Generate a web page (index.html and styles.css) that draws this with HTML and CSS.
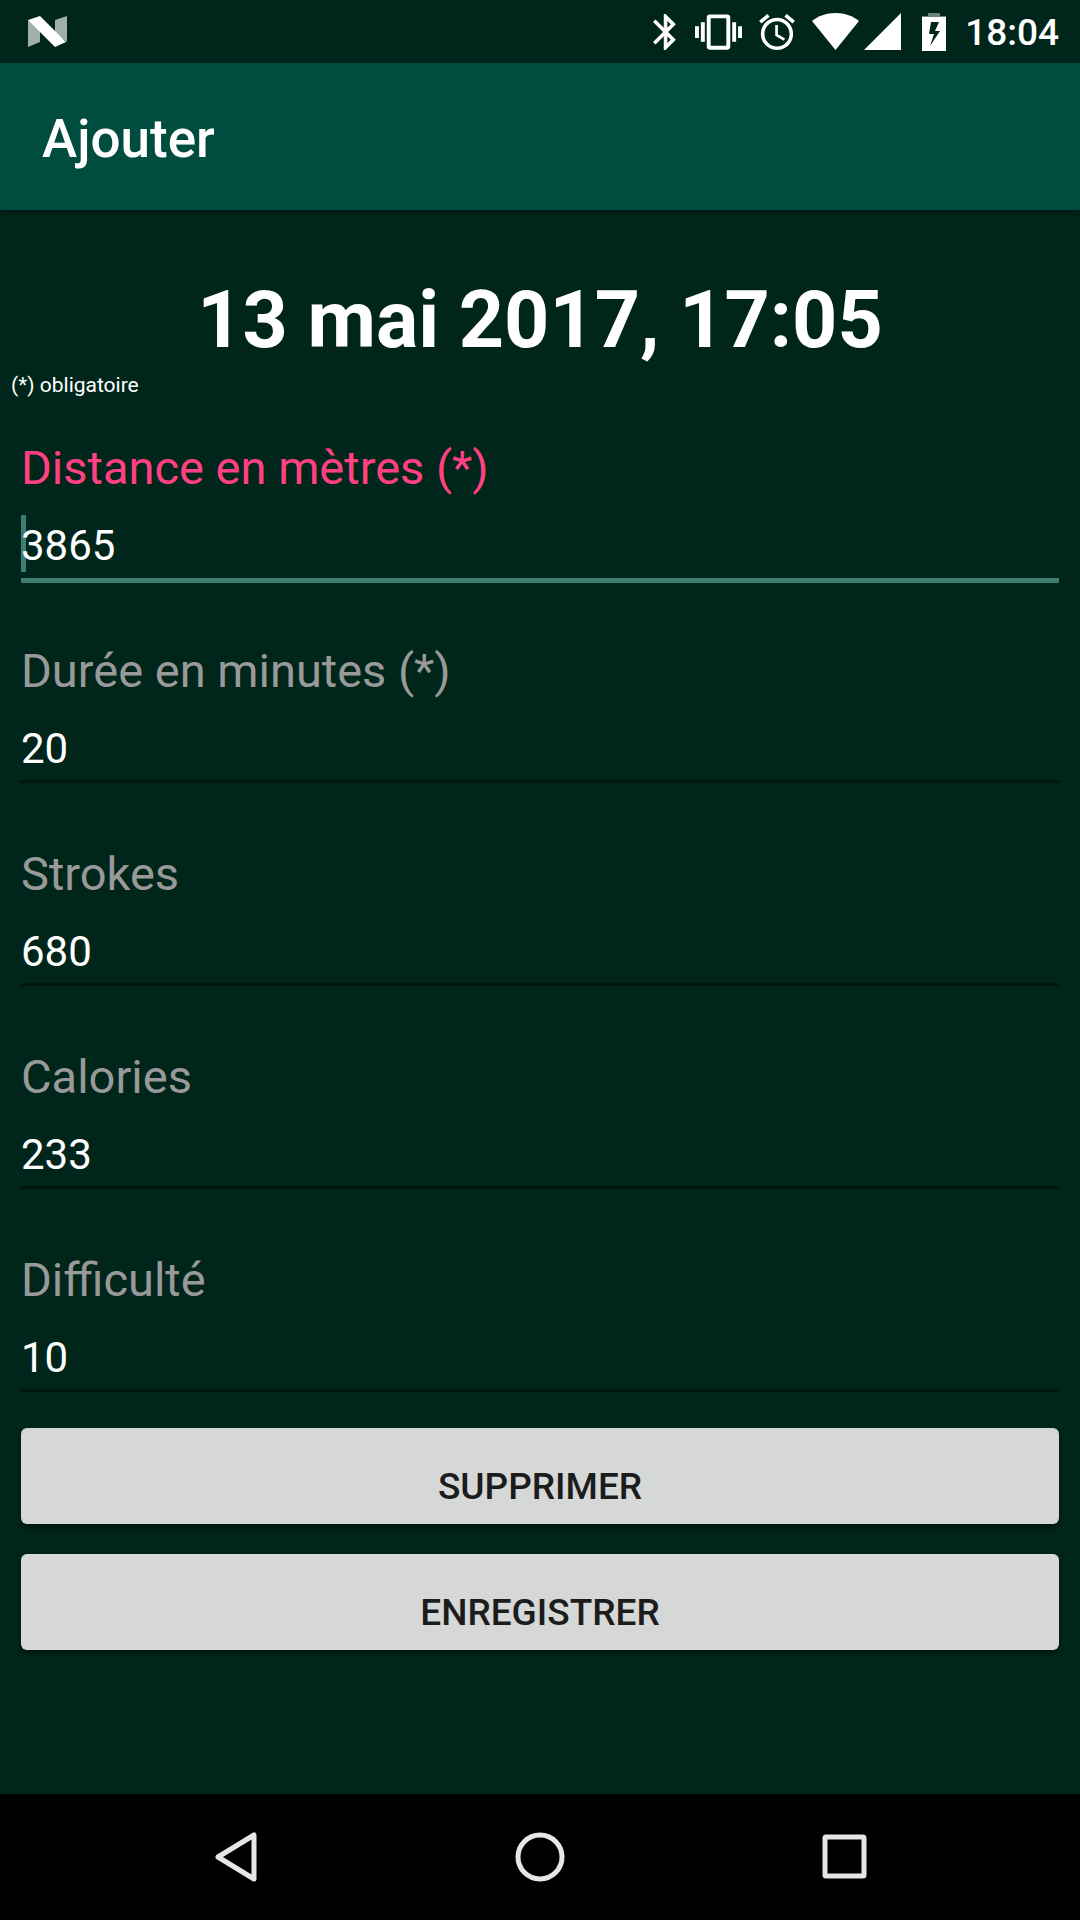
FILE: index.html
```html
<!DOCTYPE html>
<html lang="fr">
<head>
    <meta charset="UTF-8">
    <meta name="viewport" content="width=device-width, initial-scale=1.0">
    <title>Ajouter</title>
    <link rel="stylesheet" href="styles.css">
</head>
<body>

<div class="status-bar">
    <svg class="notif" width="39" height="31" viewBox="0 0 39 31">
        <path fill="#9fb0aa" d="M0 4l12 9v13L0 31zM27 4l12-4v26l-12-9z"/>
        <path fill="#fff" d="M0 4L12 0l26 26-11 5z"/>
    </svg>
    <div class="status-icons">
        <svg class="bluetooth" width="23" height="36" viewBox="5 2 12.8 20"><path d="M17.71 7.71L12 2h-1v7.59L6.41 5 5 6.41 10.59 12 5 17.59 6.41 19 11 14.41V22h1l5.71-5.71-4.3-4.29 4.3-4.29zM13 5.83l1.88 1.88L13 9.59V5.83zm1.88 10.46L13 18.17v-3.76l1.88 1.88z"/></svg>
        <svg class="vibrate" width="47" height="36" viewBox="0 3 24 18"><path d="M0 15h2V9H0v6zm3 2h2V7H3v10zm19-8v6h2V9h-2zm-3 8h2V7h-2v10zM16.5 3h-9C6.67 3 6 3.67 6 4.5v15c0 .83.67 1.5 1.5 1.5h9c.83 0 1.5-.67 1.5-1.5v-15c0-.83-.67-1.5-1.5-1.5zM16 19H8V5h8v14z"/></svg>
        <svg class="alarm" width="36" height="36" viewBox="2 1.9 20 20.1"><path d="M22 5.72l-4.6-3.86-1.29 1.53 4.6 3.86L22 5.72zM7.88 3.39L6.6 1.86 2 5.71l1.29 1.53 4.59-3.85zM12.5 8H11v6l4.75 2.85.75-1.23-4-2.37V8zM12 4c-4.97 0-9 4.03-9 9s4.02 9 9 9c4.97 0 9-4.03 9-9s-4.03-9-9-9zm0 16c-3.87 0-7-3.13-7-7s3.13-7 7-7 7 3.13 7 7-3.13 7-7 7z"/></svg>
        <svg class="wifi" width="47" height="37" viewBox="0 0 47 37"><path d="M23.5 37L0 8C6 3 14 0 23.5 0S41 3 47 8z"/></svg>
        <svg class="signal" width="37" height="37" viewBox="0 0 37 37"><path d="M37 0v37H0z"/></svg>
        <svg class="battery" width="24" height="38" viewBox="0 0 24 38">
            <path fill="#6f7f79" d="M6 0h12v3h6v1H0V3h6z"/>
            <path d="M0 4h24v34H0zM9 9L7 21h5L8 33l10-15h-5l4-9z" fill-rule="evenodd"/>
        </svg>
        <span class="clock">18:04</span>
    </div>
</div>

<header class="app-bar">
    <h1>Ajouter</h1>
</header>

<main class="content">
    <h2>13 mai 2017, 17:05</h2>
    <p class="note">(*) obligatoire</p>

    <form class="form">
        <div class="field active">
            <label for="distance">Distance en mètres (*)</label>
            <div class="caret"><input type="text" inputmode="numeric" id="distance" value="3865"></div>
        </div>
        <div class="field">
            <label for="duree">Durée en minutes (*)</label>
            <input type="text" inputmode="numeric" id="duree" value="20">
        </div>
        <div class="field">
            <label for="strokes">Strokes</label>
            <input type="text" inputmode="numeric" id="strokes" value="680">
        </div>
        <div class="field">
            <label for="calories">Calories</label>
            <input type="text" inputmode="numeric" id="calories" value="233">
        </div>
        <div class="field">
            <label for="difficulte">Difficulté</label>
            <input type="text" inputmode="numeric" id="difficulte" value="10">
        </div>

        <div class="actions">
            <button type="button">Supprimer</button>
            <button type="submit">Enregistrer</button>
        </div>
    </form>
</main>

<nav class="nav-bar">
    <button type="button" aria-label="Retour">
        <svg width="56" height="56" viewBox="0 0 56 56"><path d="M46 6v44L10 28z"/></svg>
    </button>
    <button type="button" aria-label="Accueil">
        <svg width="56" height="56" viewBox="0 0 56 56"><circle cx="28" cy="28" r="22"/></svg>
    </button>
    <button type="button" aria-label="Applications">
        <svg width="56" height="56" viewBox="0 0 56 56"><rect x="9" y="8" width="39" height="39" rx="1"/></svg>
    </button>
</nav>

</body>
</html>
```
FILE: styles.css
```css
* {
    box-sizing: border-box;
}
body {
    margin: 0;
    min-height: 100vh;
    display: flex;
    flex-direction: column;
    background: #00261b;
    color: white;
    font-family: Roboto, sans-serif;
}
h1, h2, p {
    margin: 0;
}
.status-bar {
    height: 63px;
    padding: 0 21px 0 28px;
    display: flex;
    align-items: center;
    justify-content: space-between;
}
.status-icons {
    display: flex;
    align-items: center;
    fill: white;
}
.vibrate {
    margin-left: 19px;
}
.alarm {
    margin-left: 17px;
}
.wifi {
    margin-left: 17px;
}
.signal {
    margin-left: 5px;
}
.battery {
    margin-left: 21px;
}
.clock {
    margin-left: 19px;
    padding-top: 2px;
    font-size: 37px;
    font-weight: 500;
    line-height: 40px;
}
.app-bar {
    height: 147px;
    padding: 4px 42px 0;
    display: flex;
    align-items: center;
    background: #004d3f;
    box-shadow: 0 2px 8px rgba(0, 0, 0, 0.4);
}
h1 {
    font-size: 53px;
    font-weight: 500;
    line-height: 64px;
}
.content {
    flex: 1;
    padding-top: 63px;
}
h2 {
    font-size: 79px;
    font-weight: 700;
    line-height: 94px;
    text-align: center;
}
.note {
    padding: 5px 11px 0;
    font-size: 21px;
    line-height: 26px;
}
.form {
    padding: 42px 21px 0;
    display: flex;
    flex-direction: column;
    gap: 60px;
}
.field {
    min-height: 143px;
}
.field label {
    display: block;
    font-size: 47px;
    line-height: 56px;
    color: #999;
}
.field input {
    display: block;
    width: 100%;
    height: 84px;
    padding: 24px 0 7px;
    border: none;
    border-bottom: 3px solid #00160e;
    outline: none;
    background: transparent;
    color: white;
    font-family: inherit;
    font-size: 42px;
    line-height: 50px;
}
.active label {
    color: #ff4081;
}
.active .caret input {
    height: 87px;
    padding-bottom: 8px;
    border-bottom: 5px solid #3f7e6f;
}
.caret {
    position: relative;
}
.caret::before {
    content: "";
    position: absolute;
    z-index: -1;
    left: 0;
    top: 19px;
    width: 5px;
    height: 57px;
    background: #3f7e6f;
}
.actions {
    margin-top: -27px;
    display: flex;
    flex-direction: column;
    gap: 30px;
}
.actions button {
    height: 96px;
    padding: 37px 0 15px;
    border: none;
    border-radius: 6px;
    background: #d6d7d7;
    box-shadow: 0 4px 6px rgba(0, 0, 0, 0.4);
    color: #1c1c1c;
    font-family: inherit;
    font-size: 37px;
    font-weight: 500;
    line-height: 44px;
    text-transform: uppercase;
}
.nav-bar {
    height: 126px;
    padding: 0 208px;
    display: flex;
    align-items: center;
    justify-content: space-between;
    background: black;
}
.nav-bar button {
    height: 100%;
    padding: 0;
    border: none;
    background: none;
}
.nav-bar svg {
    display: block;
    fill: none;
    stroke: #e6e6e6;
    stroke-width: 5;
    stroke-linejoin: round;
}
```
